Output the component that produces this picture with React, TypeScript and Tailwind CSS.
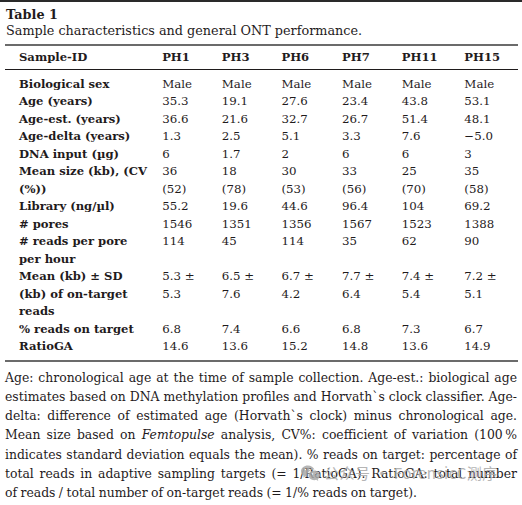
import { BsWechat } from "react-icons/bs";

const cols = ["PH1", "PH3", "PH6", "PH7", "PH11", "PH15"];

const rows: { label: string[]; values: string[][] }[] = [
  { label: ["Biological sex"], values: [["Male"], ["Male"], ["Male"], ["Male"], ["Male"], ["Male"]] },
  { label: ["Age (years)"], values: [["35.3"], ["19.1"], ["27.6"], ["23.4"], ["43.8"], ["53.1"]] },
  { label: ["Age-est. (years)"], values: [["36.6"], ["21.6"], ["32.7"], ["26.7"], ["51.4"], ["48.1"]] },
  { label: ["Age-delta (years)"], values: [["1.3"], ["2.5"], ["5.1"], ["3.3"], ["7.6"], ["\u22125.0"]] },
  { label: ["DNA input (\u00b5g)"], values: [["6"], ["1.7"], ["2"], ["6"], ["6"], ["3"]] },
  {
    label: ["Mean size (kb), (CV", "(%))"],
    values: [["36", "(52)"], ["18", "(78)"], ["30", "(53)"], ["33", "(56)"], ["25", "(70)"], ["35", "(58)"]],
  },
  { label: ["Library (ng/\u00b5l)"], values: [["55.2"], ["19.6"], ["44.6"], ["96.4"], ["104"], ["69.2"]] },
  { label: ["# pores"], values: [["1546"], ["1351"], ["1356"], ["1567"], ["1523"], ["1388"]] },
  { label: ["# reads per pore", "per hour"], values: [["114"], ["45"], ["114"], ["35"], ["62"], ["90"]] },
  {
    label: ["Mean (kb) \u00b1 SD", "(kb) of on-target", "reads"],
    values: [
      ["5.3 \u00b1", "5.3"],
      ["6.5 \u00b1", "7.6"],
      ["6.7 \u00b1", "4.2"],
      ["7.7 \u00b1", "6.4"],
      ["7.4 \u00b1", "5.4"],
      ["7.2 \u00b1", "5.1"],
    ],
  },
  { label: ["% reads on target"], values: [["6.8"], ["7.4"], ["6.6"], ["6.8"], ["7.3"], ["6.7"]] },
  { label: ["RatioGA"], values: [["14.6"], ["13.6"], ["15.2"], ["14.8"], ["13.6"], ["14.9"]] },
];

const colWidths = ["w-[60px]", "w-[60px]", "w-[61px]", "w-[60px]", "w-[63px]", "w-[54px]"];

const Lines = ({ lines }: { lines: string[] }) => (
  <>
    {lines.map((l, i) => (
      <div key={i} className="whitespace-nowrap">
        {l}
      </div>
    ))}
  </>
);

export default function App() {
  return (
    <div
      className="relative w-[522px] h-[505px] overflow-hidden bg-white border-t-2 border-[#2a2a2a] text-[#1f1b1c]"
      style={{ fontFamily: '"DejaVu Serif", "Liberation Serif", serif' }}
    >
      <div className="px-[6px] pt-[5px] leading-[16px]">
        <div className="font-bold text-[12.8px]">Table 1</div>
        <div className="text-[12.8px]">Sample characteristics and general ONT performance.</div>
      </div>

      <div className="mx-[5px] mt-[5px] w-[513px] border-t-2 border-b-2 border-[#6b6b6b]">
        <div className="flex h-[24px] items-center border-b border-[#1f1b1c] font-bold text-[11.6px] leading-[17.5px]">
          <div className="w-[158px] pl-[14px]">Sample-ID</div>
          {cols.map((c, i) => (
            <div key={c} className={colWidths[i]}>
              {c}
            </div>
          ))}
        </div>
        <div className="pt-[6px] pb-[4px] leading-[17.47px] text-[11.8px]">
          {rows.map((r, ri) => (
            <div key={ri} className="flex">
              <div className="w-[158px] pl-[14px] font-bold text-[11.6px]">
                <Lines lines={r.label} />
              </div>
              {r.values.map((v, i) => (
                <div key={i} className={colWidths[i]}>
                  <Lines lines={v} />
                </div>
              ))}
            </div>
          ))}
        </div>
      </div>

      <div className="px-[5px] pt-[6px] leading-[19.3px] text-[12.4px] text-justify [word-spacing:-2px]">
        <div className="[text-align-last:justify]">
          Age: chronological age at the time of sample collection. Age-est.: biological age
        </div>
        <div className="[text-align-last:justify]">
          estimates based on DNA methylation profiles and Horvath`s clock classifier. Age-
        </div>
        <div className="[text-align-last:justify]">
          delta: difference of estimated age (Horvath`s clock) minus chronological age.
        </div>
        <div className="[text-align-last:justify]">
          Mean size based on <i>Femtopulse</i> analysis, CV%: coefficient of variation (100&#8201;%
        </div>
        <div className="[text-align-last:justify]">
          indicates standard deviation equals the mean). % reads on target: percentage of
        </div>
        <div className="[text-align-last:justify]">
          total reads in adaptive sampling targets (= 1/RatioGA). RatioGA: total number
        </div>
        <div className="[word-spacing:-0.5px]">
          of reads / total number of on-target reads (= 1/% reads on target).
        </div>
      </div>

      {/* watermark over the footnote */}
      <div className="absolute left-[301px] top-[461px] flex items-center gap-[4px] text-[#a9a9a9] opacity-85">
        <BsWechat className="h-[19px] w-[19px]" />
        <span
          className="text-[15px] leading-[18px] tracking-[0.5px]"
          style={{ fontFamily: '"Noto Sans CJK SC", "Noto Sans", sans-serif' }}
        >
          公众号 · ForensicC测序
        </span>
      </div>
    </div>
  );
}
